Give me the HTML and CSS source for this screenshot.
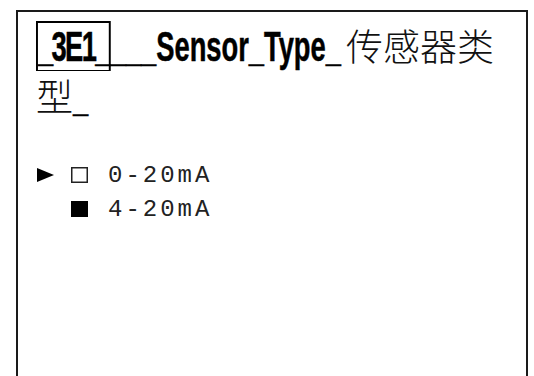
FILE: index.html
```html
<!DOCTYPE html>
<html lang="zh-CN">
<head>
  <meta charset="UTF-8" />
  <meta name="viewport" content="width=device-width, initial-scale=1.0" />
  <title>3E1 Sensor Type</title>
  <link rel="stylesheet" href="styles.css">
</head>
<body>
  <div class="screen">
    <h1 class="title"><span class="latin"><span class="squeeze"><span class="code">_3E1_</span>___Sensor_Type_</span></span>传感器类型<span class="latin tail"><span class="squeeze">_</span></span></h1>

    <div class="menu">
      <div class="row">
        <span class="cursor">
          <svg width="17" height="14" viewBox="0 0 17 14"><polygon points="0,0 17,7 0,14" fill="#000"/></svg>
        </span>
        <span class="check">
          <svg width="17" height="16" viewBox="0 0 17 16"><rect x="0.75" y="0.75" width="15.5" height="14.5" fill="none" stroke="#222" stroke-width="1.5"/></svg>
        </span>
        <span class="label">0-20mA</span>
      </div>
      <div class="row">
        <span class="cursor"></span>
        <span class="check">
          <svg width="17" height="16" viewBox="0 0 17 16"><rect x="0" y="0" width="17" height="16" fill="#000"/></svg>
        </span>
        <span class="label">4-20mA</span>
      </div>
    </div>
  </div>
</body>
</html>
```

FILE: styles.css
```css
body {
  margin: 0;
  padding: 10px 0 0 16px;
  background: #fff;
  overflow: hidden;
}
.screen {
  width: 512px;
  height: 400px;
  border: 2px solid #1a1a1a;
  padding: 8px 0 0 18px;
  box-sizing: border-box;
}
.title {
  margin: 0;
  width: 472px;
  font-family: "Noto Sans CJK SC", sans-serif;
  font-weight: 300;
  font-size: 37px;
  line-height: 50px;
  color: #111;
}
/* the LCD font is very narrow: squeeze Liberation Sans Bold */
.latin {
  display: inline-block;
  width: 310px;
  white-space: nowrap;
  font-family: "Liberation Sans", sans-serif;
  font-weight: bold;
  font-size: 42px;
  line-height: 1;
  color: #000;
  -webkit-text-stroke: 0.5px #000;
}
.latin.tail {
  width: 15px;
}
.squeeze {
  display: inline-block;
  transform: scaleX(0.65);
  transform-origin: 0 0;
}
.code {
  letter-spacing: -2.5px;
  border: 2px solid #000;
  border-left-width: 3px;
  border-right-width: 3px;
  border-bottom-width: 1px;
}
.menu {
  margin-top: 38px;
  padding-left: 1px;
}
.row {
  display: grid;
  grid-template-columns: 34px 37px auto;
  align-items: center;
  height: 34px;
}
.cursor, .check {
  display: flex;
  align-items: center;
}
.label {
  font-family: "Liberation Mono", monospace;
  font-size: 24px;
  letter-spacing: 3px;
  color: #222;
}
```
